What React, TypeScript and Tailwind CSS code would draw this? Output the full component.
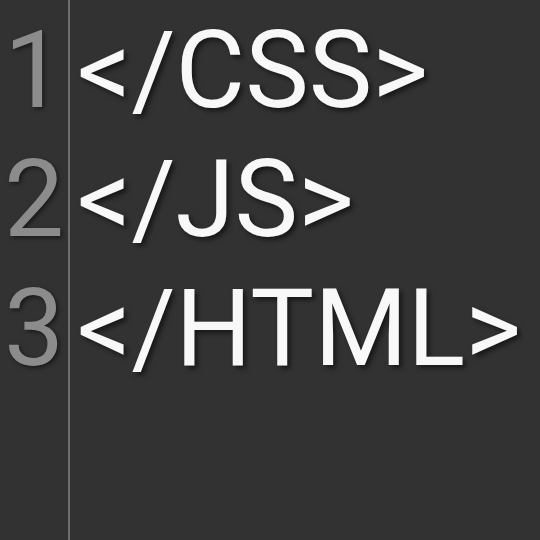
const lines = ["</CSS>", "</JS>", "</HTML>"];

export default function App() {
  return (
    <div className="w-[540px] h-[540px] bg-[#323232] flex overflow-hidden font-['Roboto',sans-serif]">
      <div className="w-[70px] shrink-0 border-r-2 border-[#6e6e6e] pt-[6px] flex flex-col">
        {lines.map((_, i) => (
          <div
            key={i}
            className="h-[129px] leading-[129px] text-[107px] text-[#8c8c8c] pl-[4px] [text-shadow:2px_2px_4px_rgba(0,0,0,0.5)]"
          >
            {i + 1}
          </div>
        ))}
      </div>
      <div className="flex-1 pt-[6px] pl-[7px] flex flex-col">
        {lines.map((l) => (
          <div
            key={l}
            className="h-[129px] leading-[129px] text-[107px] text-[#f8f8f8] whitespace-nowrap [text-shadow:3px_3px_5px_rgba(0,0,0,0.55)]"
          >
            {l}
          </div>
        ))}
      </div>
    </div>
  );
}
